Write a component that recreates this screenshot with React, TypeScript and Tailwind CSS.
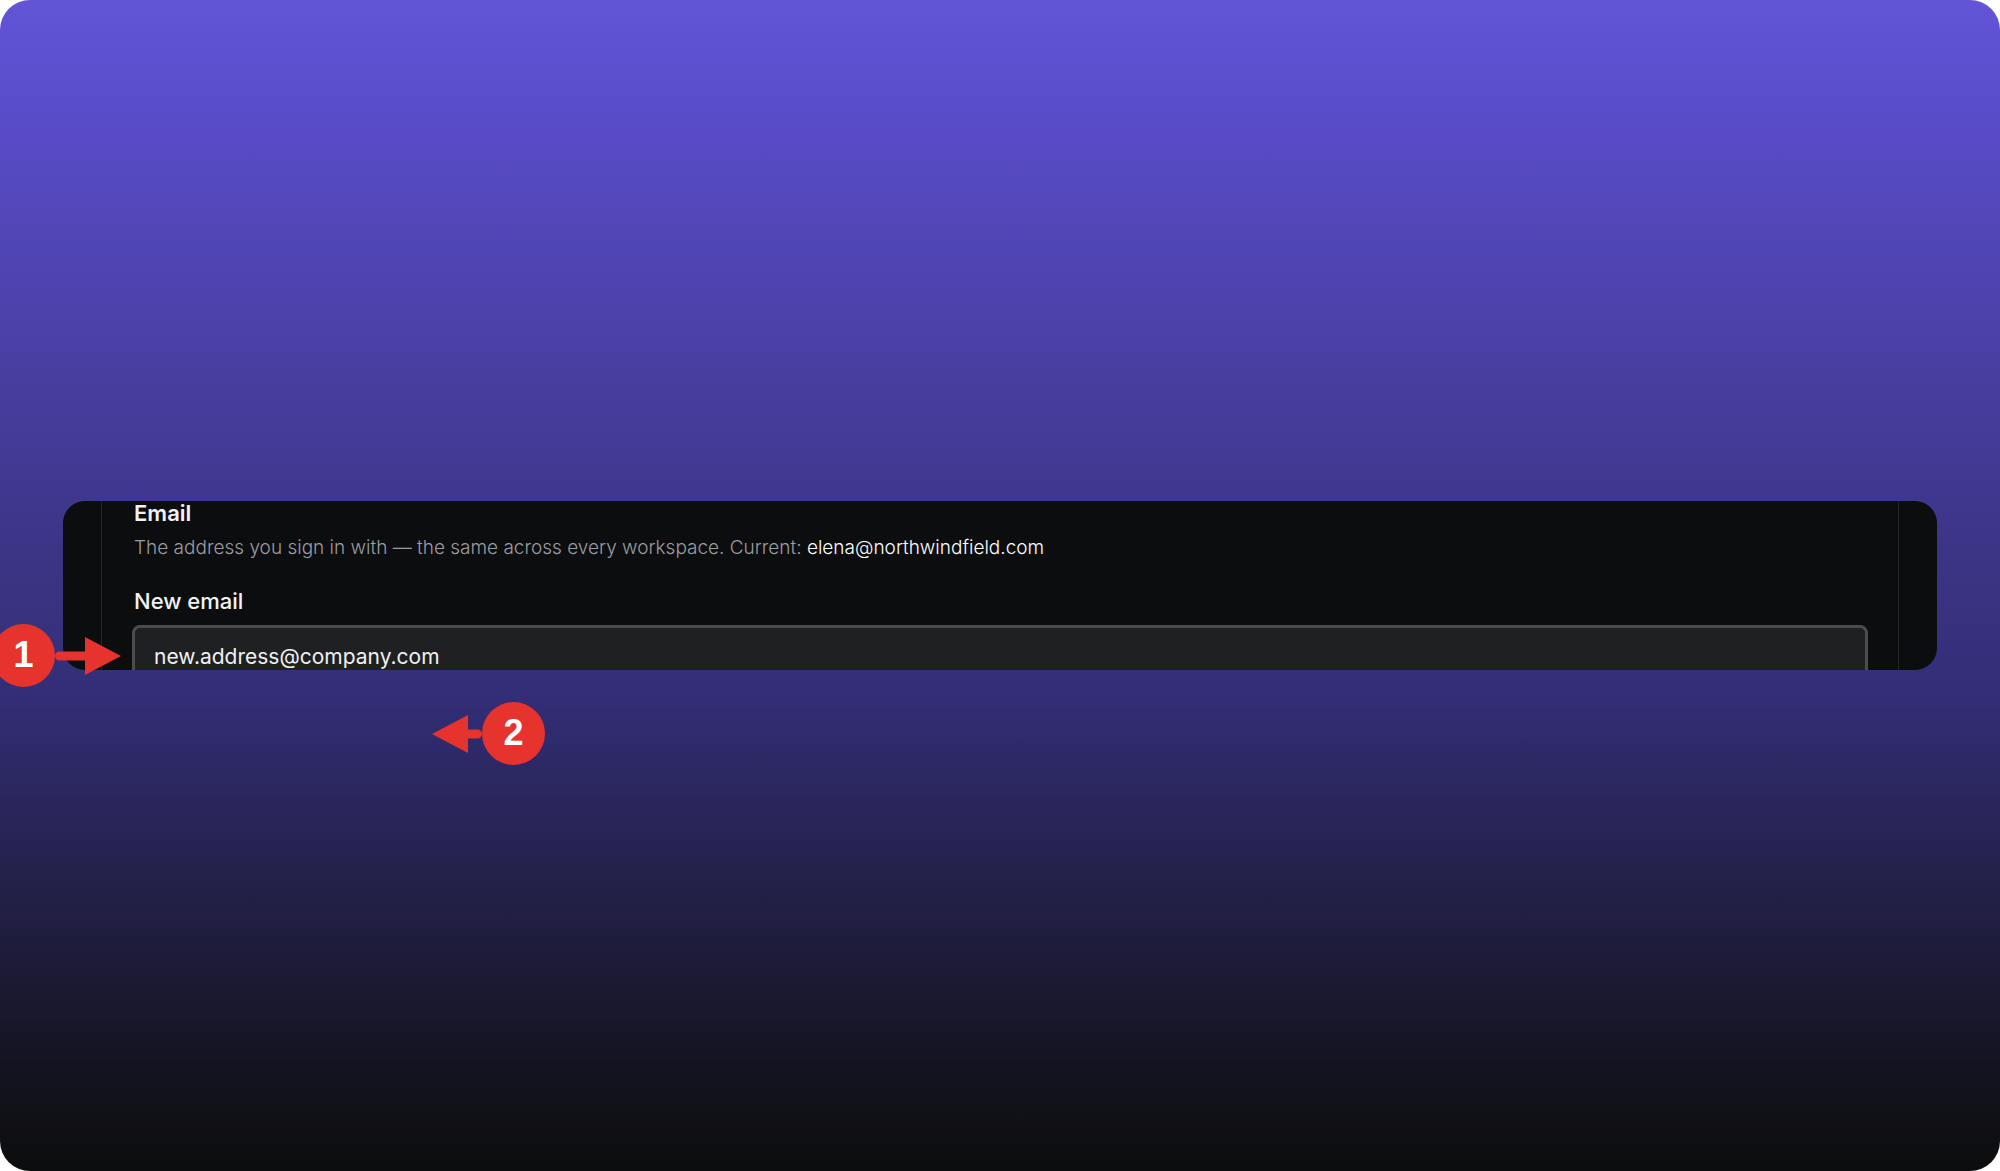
function Marker({ step, direction, className }: { step: number; direction: 'left' | 'right'; className: string }) {
  const badge = (
    <span className="flex size-[63px] shrink-0 items-center justify-center rounded-full bg-[#e6332d] pb-0.5 font-['Liberation_Sans',Arial,sans-serif] text-4xl font-bold text-white">
      {step}
    </span>
  );
  return (
    <div className={`absolute flex items-center ${className}`}>
      {direction === 'right' && badge}
      {direction === 'right' ? (
        <svg className="h-[38px] w-[66px]" viewBox="0 0 66 38" fill="#e6332d" aria-hidden="true">
          <path d="M4.5 14.5H30V0L66 19 30 38V23.5H4.5A4.5 4.5 0 0 1 4.5 14.5Z" />
        </svg>
      ) : (
        <svg className="h-[38px] w-[50px]" viewBox="0 0 50 38" fill="#e6332d" aria-hidden="true">
          <path d="M45.5 14.5H36V0L0 19 36 38V23.5H45.5A4.5 4.5 0 0 0 45.5 14.5Z" />
        </svg>
      )}
      {direction === 'left' && badge}
    </div>
  );
}

export default function App() {
  return (
    <main className="flex min-h-screen items-center overflow-hidden rounded-[30px] bg-[linear-gradient(180deg,#6255d6_0%,#5a4dcb_9%,#3d3689_45%,#332e77_59%,#232048_76%,#13131e_92%,#0c0d0e_100%)] px-[63px] font-[Inter,sans-serif]">
      <div className="relative w-full">
        <section className="h-[169px] overflow-hidden rounded-[22px] bg-[#0b0d0e] px-[38px]">
          <div className="border-x border-[#222427] px-[30px]">
            <div className="px-0.5">
              <h2 className="text-[22px] leading-6 font-semibold text-[#f2f3f4]">Email</h2>
              <p className="mt-[9px] text-[19px] leading-7 font-light text-[#9c9da4]">
                The address you sign in with — the same across every workspace. Current:{' '}
                <span className="text-white">elena@northwindfield.com</span>
              </p>
              <label htmlFor="new-email" className="mt-[25px] block text-[22px] leading-7 font-medium text-[#f2f3f4]">
                New email
              </label>
            </div>
            <input
              id="new-email"
              type="email"
              defaultValue="new.address@company.com"
              className="mt-2.5 block h-[62px] w-full rounded-lg border-3 border-[#4b4c50] bg-[#1f2022] px-[19px] text-[21px] text-[#eff0f1] outline-none"
            />
          </div>
        </section>
        <Marker step={1} direction="right" className="top-[123px] -left-[71px]" />
        <Marker step={2} direction="left" className="top-[201px] left-[369px]" />
      </div>
    </main>
  );
}
